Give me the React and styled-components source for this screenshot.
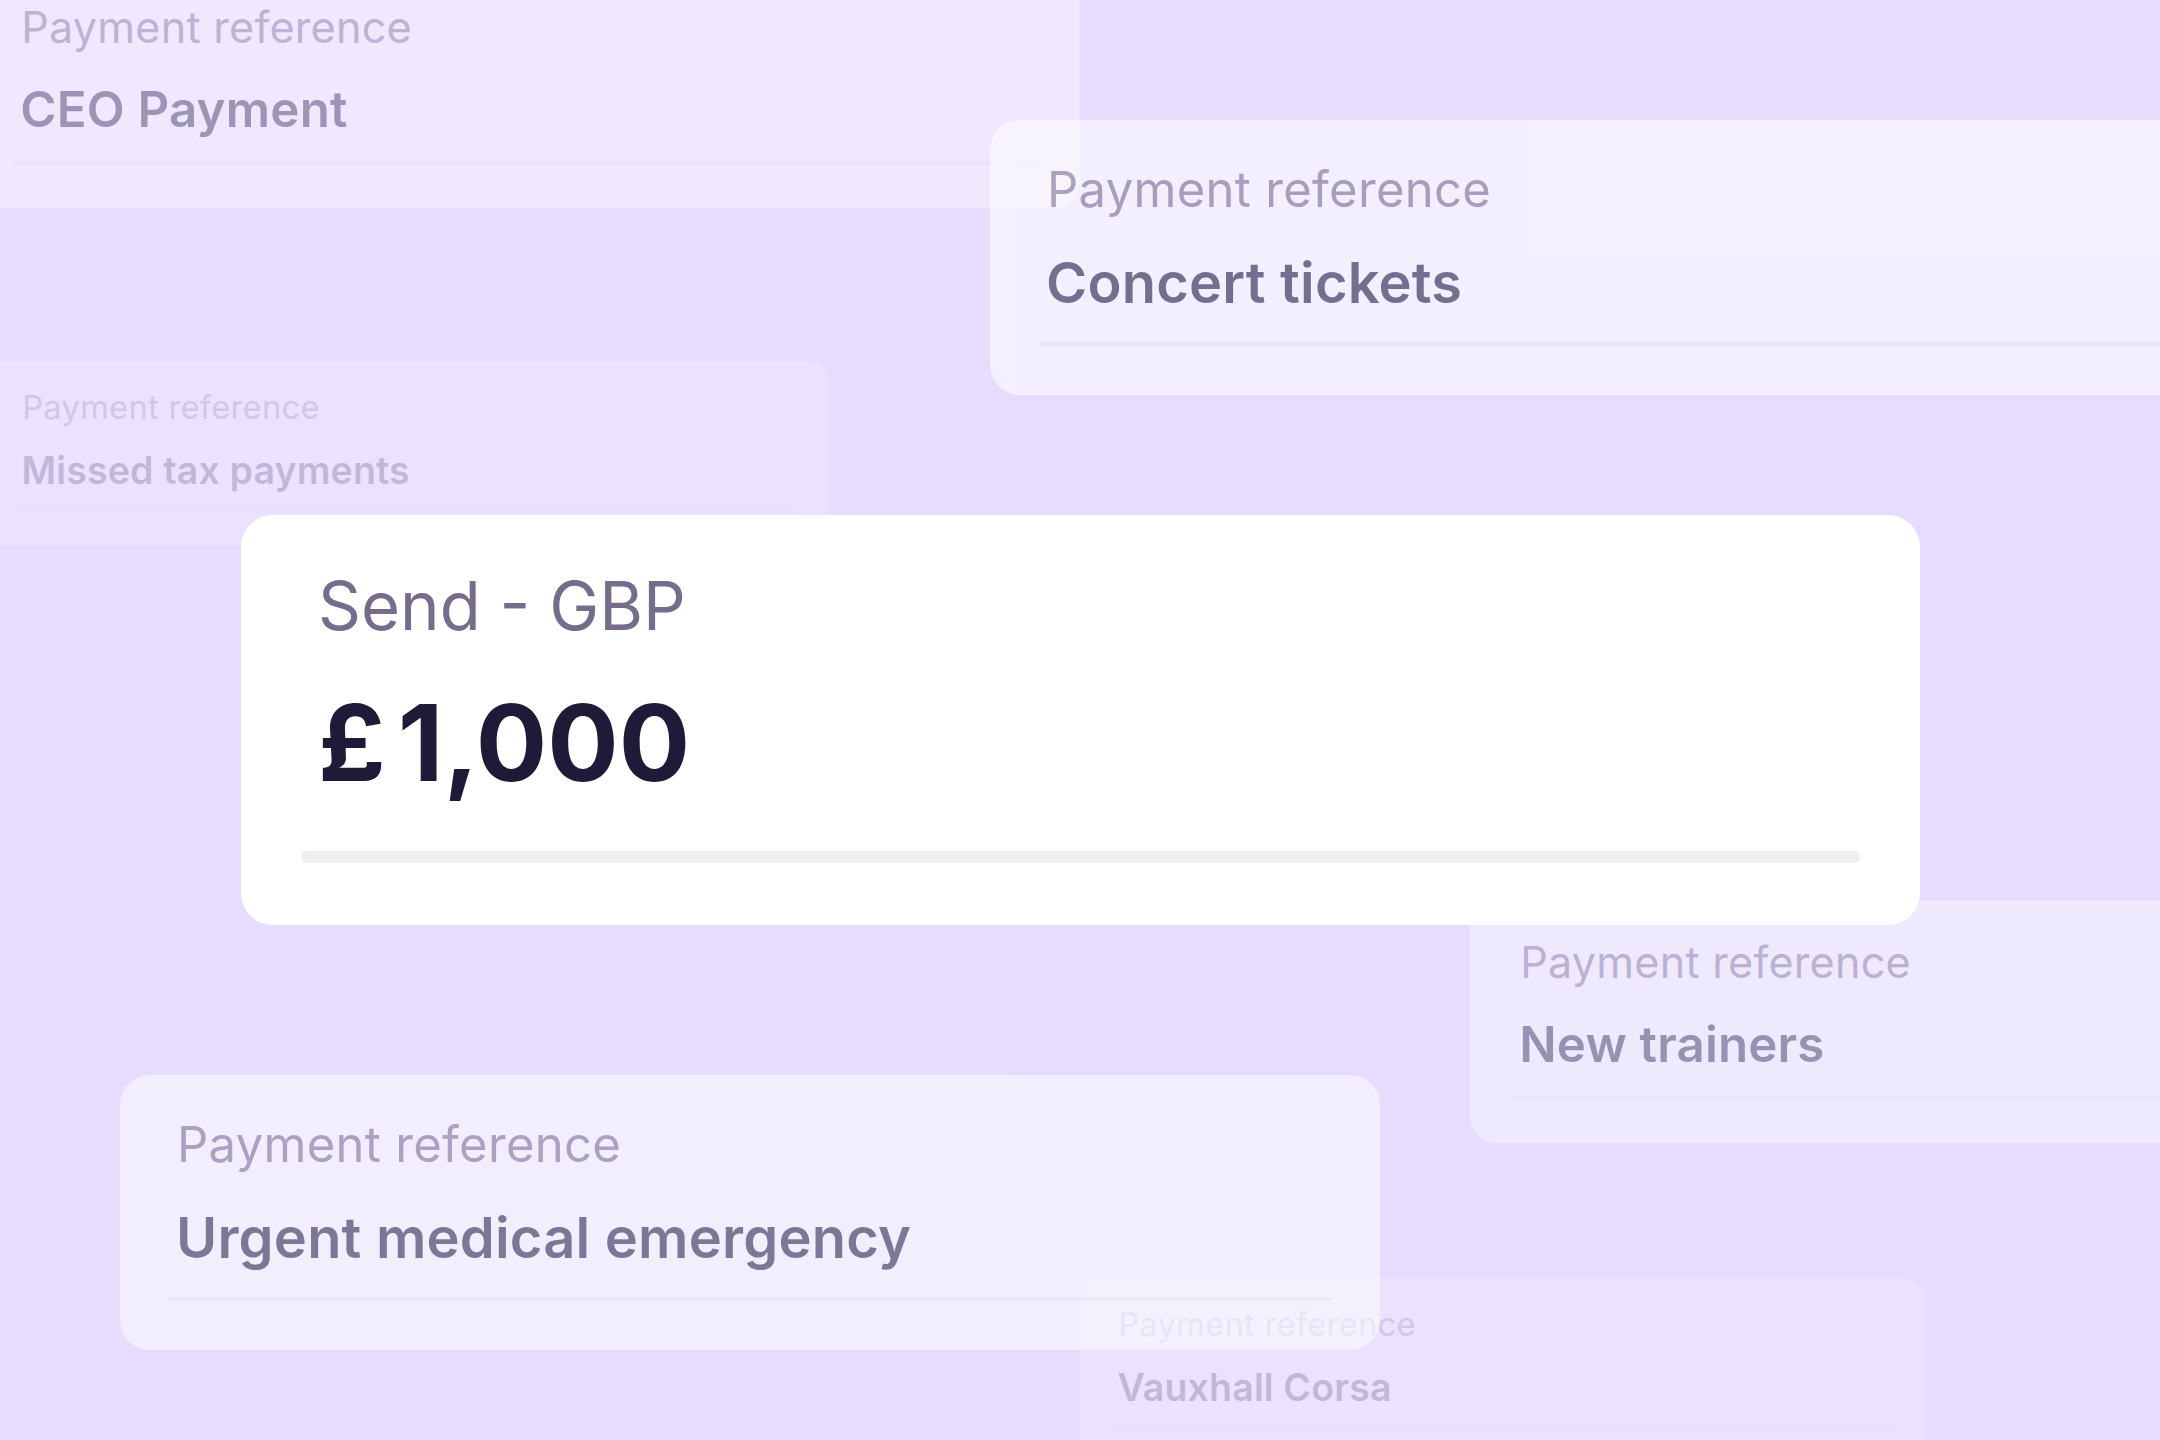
import React from 'react'
import styled, { createGlobalStyle } from 'styled-components'

const GlobalStyle = createGlobalStyle`
  html, body {
    margin: 0;
    padding: 0;
    background: #E6DCFE;
    overflow: hidden;
  }
  body {
    font-family: Inter, "Noto Sans", "Liberation Sans", sans-serif;
    -webkit-font-smoothing: antialiased;
  }
`

// faded reference cards scattered around the transfer card
const references = [
  { id: 'tax', x: -16, y: 361, scale: 0.67, alpha: 0.18, value: 'Missed tax payments' },
  { id: 'ceo', x: -29, y: -34, scale: 0.88, alpha: 0.36, value: 'CEO Payment' },
  { id: 'concert', x: 990, y: 120, scale: 1, alpha: 0.56, value: 'Concert tickets' },
  { id: 'corsa', x: 1080, y: 1278, scale: 0.67, alpha: 0.18, value: 'Vauxhall Corsa' },
  { id: 'medical', x: 120, y: 1075, scale: 1, alpha: 0.52, value: 'Urgent medical emergency' },
  { id: 'trainers', x: 1470, y: 901, scale: 0.88, alpha: 0.38, value: 'New trainers' },
]

function App() {
  return (
    <>
      <GlobalStyle />
      <Stage>
        {references.map(ref => (
          <RefCard
            key={ref.id}
            $x={ref.x}
            $y={ref.y}
            $scale={ref.scale}
            $alpha={ref.alpha}
          >
            <RefLabel>Payment reference</RefLabel>
            <RefValue>{ref.value}</RefValue>
            <RefDivider />
          </RefCard>
        ))}
        <SendCard>
          <SendLabel>Send - GBP</SendLabel>
          <Amount><Currency>£</Currency>1,000</Amount>
          <SendDivider />
        </SendCard>
      </Stage>
    </>
  )
}

export default App

const Stage = styled.div`
    position: relative;
    width: 2160px;
    height: 1440px;
    overflow: hidden;
    background: #E6DCFE;
`

const RefCard = styled.div`
    position: absolute;
    left: ${props => props.$x}px;
    top: ${props => props.$y}px;
    width: 1260px;
    height: 275px;
    box-sizing: border-box;
    padding: 40px 48px 0;
    display: flex;
    flex-direction: column;
    background: #FFFFFF;
    border-radius: 30px;
    opacity: ${props => props.$alpha};
    transform: scale(${props => props.$scale});
    transform-origin: 0 0;
`

const RefLabel = styled.div`
    padding-left: 9px;
    font-size: 49px;
    line-height: 60px;
    font-weight: 400;
    letter-spacing: 0.3px;
    color: #776C8C;
    white-space: nowrap;
`

const RefValue = styled.div`
    margin-top: 29px;
    padding-left: 8px;
    font-size: 56px;
    line-height: 68px;
    font-weight: 600;
    letter-spacing: 0.2px;
    color: #1F1A38;
    white-space: nowrap;
`

const RefDivider = styled.div`
    margin-top: 25px;
    height: 4px;
    border-radius: 2px;
    background: #EFEFEF;
`

const SendCard = styled.div`
    position: absolute;
    left: 241px;
    top: 515px;
    width: 1679px;
    height: 410px;
    box-sizing: border-box;
    padding: 51px 60px 0;
    display: flex;
    flex-direction: column;
    background: #FFFFFF;
    border-radius: 32px;
`

const SendLabel = styled.div`
    padding-left: 17px;
    font-size: 67px;
    line-height: 80px;
    font-weight: 400;
    color: #776C8C;
`

const Amount = styled.div`
    margin-top: 37px;
    padding-left: 17px;
    font-size: 106px;
    line-height: 120px;
    font-weight: 700;
    color: #1F1A38;
`

const Currency = styled.span`
    margin-right: 12px;
`

const SendDivider = styled.div`
    margin-top: 48px;
    height: 12px;
    border-radius: 6px;
    background: #EFEFEF;
`
